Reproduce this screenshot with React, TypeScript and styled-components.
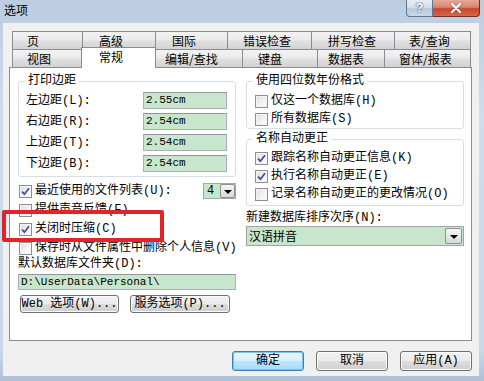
import React from 'react';
import styled, { createGlobalStyle, css } from 'styled-components';

/* =========================
   GLOBAL
========================= */
const GlobalStyle = createGlobalStyle`
  html, body {
    margin: 0;
    padding: 0;
    background: #fff;
  }
  body {
    font-family: "Liberation Mono", "Noto Sans CJK SC", monospace;
    font-size: 12px;
    line-height: 14px;
    color: #000;
  }
  * {
    box-sizing: border-box;
  }
`;

/* =========================
   WINDOW FRAME
========================= */
const Window = styled.div`
  position: relative;
  width: 484px;
  height: 381px;
  display: flex;
  flex-direction: column;
  background: linear-gradient(to bottom, #bccde1 0%, #cfdcea 30%, #c9d7e8 92%, #aebfd6 100%);
  overflow: hidden;
`;

const TitleBar = styled.div`
  height: 23px;
  display: flex;
  align-items: flex-start;
  padding-left: 4px;
`;

const TitleText = styled.div`
  margin-top: 3px;
  font-family: "Noto Sans CJK SC", sans-serif;
  font-size: 12px;
  line-height: 14px;
`;

const CaptionButtons = styled.div`
  margin-left: auto;
  margin-right: 4px;
  display: flex;
`;

const CaptionButton = styled.div<{ $close?: boolean }>`
  width: ${({ $close }) => ($close ? 47 : 27)}px;
  height: 17px;
  display: flex;
  align-items: center;
  justify-content: center;
  border: 1px solid #65768b;
  border-top: none;
  color: #fff;
  font-family: "Liberation Sans", sans-serif;
  font-weight: bold;
  font-size: 13px;
  text-shadow: 0 0 2px #3a4a60, 0 0 1px #3a4a60;
  ${({ $close }) =>
    $close
      ? css`
          border-left: none;
          border-color: #6b3026;
          border-radius: 0 0 4px 0;
          background: linear-gradient(to bottom, #e8a898 0%, #d98472 45%, #c7452b 55%, #d6674c 100%);
        `
      : css`
          border-radius: 0 0 0 4px;
          background: linear-gradient(to bottom, #e6edf5 0%, #d3dfec 45%, #b9cadd 55%, #c8d6e6 100%);
        `}
`;

const Client = styled.div`
  flex: 1;
  margin: 0 5px 5px 3px;
  background: #f0f0f0;
  padding: 8px 7px 0 6px;
  display: flex;
  flex-direction: column;
`;

/* =========================
   TABS
========================= */
const TabArea = styled.div`
  padding-left: 3px;
`;

const TabRow = styled.div`
  display: flex;
  align-items: flex-start;
  height: 18px;
`;

const Tab = styled.div<{ $w: number; $pad: number; $active?: boolean }>`
  width: ${({ $w }) => $w}px;
  height: 18px;
  margin-left: -1px;
  padding: 1px 0 0 ${({ $pad }) => $pad}px;
  border: 1px solid #898c95;
  border-bottom: none;
  background: linear-gradient(to bottom, #f3f3f3 0%, #ebebeb 45%, #dfdfdf 55%, #d3d3d3 100%);
  font-family: "Noto Sans CJK SC", "Liberation Mono", sans-serif;
  line-height: 16px;
  white-space: nowrap;

  &:first-child {
    margin-left: 0;
  }

  ${({ $active }) =>
    $active &&
    css`
      position: relative;
      z-index: 1;
      height: 21px;
      margin-top: -2px;
      padding-top: 2px;
      background: #fff;
      line-height: 14px;
    `}
`;

/* =========================
   PANEL
========================= */
const Panel = styled.div`
  height: 274px;
  background: #fff;
  border: 1px solid #898c95;
  padding: 6px 7px 0 8px;
  display: grid;
  grid-template-columns: 218px 218px;
  column-gap: 10px;
  align-items: start;
`;

const Column = styled.div`
  display: flex;
  flex-direction: column;
  min-width: 0;
  width: 218px;
`;

const Group = styled.fieldset<{ $mt?: number }>`
  margin: ${({ $mt }) => $mt ?? 0}px 0 0 0;
  padding: 0;
  min-width: 0;
  border: 1px solid #d5dfe5;
  border-radius: 3px;
`;

const Legend = styled.legend`
  margin-left: 6px;
  padding: 0 3px;
  line-height: 14px;
`;

const GroupBody = styled.div<{ $pad: string }>`
  padding: ${({ $pad }) => $pad};
`;

const MarginGrid = styled.div`
  display: grid;
  grid-template-columns: 1fr 84px;
  row-gap: 4px;
  align-items: center;
`;

const TextField = styled.div<{ $h?: number }>`
  height: ${({ $h }) => $h ?? 17}px;
  border: 1px solid #a9b0b8;
  border-top-color: #8e959d;
  background: #c8e6cb;
  padding-left: 2px;
  font-size: 11px;
  line-height: ${({ $h }) => ($h ?? 17) - 2}px;
  white-space: nowrap;
  overflow: hidden;
`;

const CheckList = styled.div<{ $gap: number; $mt?: number }>`
  display: flex;
  flex-direction: column;
  gap: ${({ $gap }) => $gap}px;
  margin-top: ${({ $mt }) => $mt ?? 0}px;
`;

const CheckRow = styled.div`
  display: flex;
  align-items: center;
  gap: 3px;
  height: 16px;
  white-space: nowrap;
  min-width: 0;
`;

const Box = styled.span<{ $ml?: number }>`
  flex: none;
  width: 13px;
  height: 13px;
  margin-left: ${({ $ml }) => $ml ?? 0}px;
  border: 1px solid #8e8f8f;
  background: linear-gradient(135deg, #dcdcdc 0%, #f4f4f4 60%, #ffffff 100%);
  box-shadow: inset 0 0 0 1px #f4f4f4;
  display: flex;
  align-items: center;
  justify-content: center;
`;

const Spinner = styled.div`
  flex: none;
  margin-left: auto;
  width: 33px;
  height: 16px;
  border: 1px solid #a6a6a6;
  background: #c8e6cb;
  display: flex;
  align-items: center;
  padding-left: 3px;
  font-size: 12px;
`;

const DropButton = styled.span<{ $w: number; $h: number }>`
  flex: none;
  margin-left: auto;
  width: ${({ $w }) => $w}px;
  height: ${({ $h }) => $h}px;
  border: 1px solid #8f8f8f;
  border-radius: 2px;
  background: linear-gradient(to bottom, #f6f6f6 0%, #e8e8e8 50%, #d8d8d8 100%);
  display: flex;
  align-items: center;
  justify-content: center;
`;

const Arrow = styled.span`
  width: 0;
  height: 0;
  border-left: 4px solid transparent;
  border-right: 4px solid transparent;
  border-top: 4px solid #000;
  margin-top: 1px;
`;

const FieldLabel = styled.div<{ $mt: number }>`
  margin-top: ${({ $mt }) => $mt}px;
  line-height: 14px;
  white-space: nowrap;
`;

const PathRow = styled.div`
  margin-top: 3px;
`;

const ButtonRow = styled.div`
  margin-top: 5px;
  padding-left: 2px;
  display: flex;
  gap: 11px;
`;

const Select = styled.div`
  margin-top: 1px;
  height: 20px;
  border: 1px solid #a3a3a3;
  background: #c8e6cb;
  display: flex;
  align-items: center;
  padding: 0 1px 0 2px;
  font-family: "Noto Sans CJK SC", sans-serif;
`;

/* =========================
   BUTTONS
========================= */
const PushButton = styled.button<{ $w: number; $h: number; $default?: boolean }>`
  width: ${({ $w }) => $w}px;
  height: ${({ $h }) => $h}px;
  padding: 0;
  font: inherit;
  color: #000;
  border: 1px solid #707070;
  border-radius: 3px;
  background: linear-gradient(to bottom, #f2f2f2 0%, #ebebeb 49%, #dddddd 51%, #cfcfcf 100%);
  box-shadow: inset 0 0 0 1px #fbfbfb;
  white-space: nowrap;

  ${({ $default }) =>
    $default &&
    css`
      border-color: #3c7fb1;
      background: linear-gradient(to bottom, #eaf6fd 0%, #d9f0fc 49%, #bee6fd 51%, #a7d9f5 100%);
      box-shadow: inset 0 0 0 1px #7ec4e8;
    `}
`;

const Footer = styled.div`
  display: flex;
  justify-content: flex-end;
  gap: 12px;
  padding-top: 10px;
`;

const Highlight = styled.div`
  position: absolute;
  left: 2px;
  top: 210px;
  width: 162px;
  height: 32px;
  border: 4px solid #e2232a;
  border-radius: 2px;
  pointer-events: none;
`;

/* =========================
   DATA
========================= */
const tabRows = [
  [
    { label: '页', w: 71, pad: 14 },
    { label: '高级', w: 74, pad: 16 },
    { label: '国际', w: 73, pad: 16 },
    { label: '错误检查', w: 85, pad: 15 },
    { label: '拼写检查', w: 84, pad: 16 },
    { label: '表/查询', w: 77, pad: 14 },
  ],
  [
    { label: '视图', w: 70, pad: 14 },
    { label: '常规', w: 75, pad: 17, active: true },
    { label: '编辑/查找', w: 88, pad: 9 },
    { label: '键盘', w: 76, pad: 15 },
    { label: '数据表', w: 68, pad: 10 },
    { label: '窗体/报表', w: 87, pad: 14 },
  ],
];

const margins = [
  { label: '左边距(L):', value: '2.55cm' },
  { label: '右边距(R):', value: '2.54cm' },
  { label: '上边距(T):', value: '2.54cm' },
  { label: '下边距(B):', value: '2.54cm' },
];

const Check: React.FC<{ checked?: boolean; ml?: number }> = ({ checked, ml }) => (
  <Box $ml={ml}>
    {checked && (
      <svg width="9" height="9" viewBox="0 0 9 9">
        <path d="M1 4.6 L3.4 7.2 L8 1.2" fill="none" stroke="#3b4e94" strokeWidth="1.7" />
      </svg>
    )}
  </Box>
);

/* =========================
   COMPONENT
========================= */
export default function App() {
  return (
    <Window>
      <GlobalStyle />
      <TitleBar>
        <TitleText>选项</TitleText>
        <CaptionButtons>
          <CaptionButton>?</CaptionButton>
          <CaptionButton $close>
            <svg width="12" height="10" viewBox="0 0 12 10">
              <path d="M2 1 L10 9 M10 1 L2 9" stroke="#3d2a28" strokeWidth="3.4" strokeLinecap="round" opacity="0.35" />
              <path d="M2 1 L10 9 M10 1 L2 9" stroke="#fff" strokeWidth="2.4" strokeLinecap="round" />
            </svg>
          </CaptionButton>
        </CaptionButtons>
      </TitleBar>

      <Client>
        <TabArea>
          {tabRows.map((row, r) => (
            <TabRow key={r}>
              {row.map((t) => (
                <Tab key={t.label} $w={t.w} $pad={t.pad} $active={'active' in t && t.active}>
                  {t.label}
                </Tab>
              ))}
            </TabRow>
          ))}
        </TabArea>

        <Panel>
          <Column>
            <Group>
              <Legend>打印边距</Legend>
              <GroupBody $pad="4px 8px 4px 7px">
                <MarginGrid>
                  {margins.map((m) => (
                    <React.Fragment key={m.label}>
                      <span>{m.label}</span>
                      <TextField>{m.value}</TextField>
                    </React.Fragment>
                  ))}
                </MarginGrid>
              </GroupBody>
            </Group>

            <CheckList $gap={3} $mt={6}>
              <CheckRow>
                <Check checked ml={1} />
                <span>最近使用的文件列表(U):</span>
                <Spinner>
                  4
                  <DropButton $w={15} $h={14}>
                    <Arrow />
                  </DropButton>
                </Spinner>
              </CheckRow>
              <CheckRow>
                <Check ml={1} />
                <span>提供声音反馈(F)</span>
              </CheckRow>
              <CheckRow>
                <Check checked ml={1} />
                <span>关闭时压缩(C)</span>
              </CheckRow>
              <CheckRow>
                <Check ml={1} />
                <span>保存时从文件属性中删除个人信息(V)</span>
              </CheckRow>
            </CheckList>

            <FieldLabel $mt={1}>默认数据库文件夹(D):</FieldLabel>
            <PathRow>
              <TextField $h={16}>D:\UserData\Personal\</TextField>
            </PathRow>
            <ButtonRow>
              <PushButton $w={99} $h={18}>Web 选项(W)...</PushButton>
              <PushButton $w={100} $h={18}>服务选项(P)...</PushButton>
            </ButtonRow>
          </Column>

          <Column>
            <Group>
              <Legend>使用四位数年份格式</Legend>
              <GroupBody $pad="5px 8px 1px 8px">
                <CheckList $gap={2}>
                  <CheckRow>
                    <Check />
                    <span>仅这一个数据库(H)</span>
                  </CheckRow>
                  <CheckRow>
                    <Check />
                    <span>所有数据库(S)</span>
                  </CheckRow>
                </CheckList>
              </GroupBody>
            </Group>

            <Group $mt={3}>
              <Legend>名称自动更正</Legend>
              <GroupBody $pad="4px 8px 3px 8px">
                <CheckList $gap={2}>
                  <CheckRow>
                    <Check checked />
                    <span>跟踪名称自动更正信息(K)</span>
                  </CheckRow>
                  <CheckRow>
                    <Check checked />
                    <span>执行名称自动更正(E)</span>
                  </CheckRow>
                  <CheckRow>
                    <Check />
                    <span>记录名称自动更正的更改情况(O)</span>
                  </CheckRow>
                </CheckList>
              </GroupBody>
            </Group>

            <FieldLabel $mt={5}>新建数据库排序次序(N):</FieldLabel>
            <Select>
              汉语拼音
              <DropButton $w={17} $h={16}>
                <Arrow />
              </DropButton>
            </Select>
          </Column>
        </Panel>

        <Footer>
          <PushButton $w={72} $h={20} $default>确定</PushButton>
          <PushButton $w={72} $h={20}>取消</PushButton>
          <PushButton $w={72} $h={20}>应用(A)</PushButton>
        </Footer>
      </Client>

      <Highlight />
    </Window>
  );
}
